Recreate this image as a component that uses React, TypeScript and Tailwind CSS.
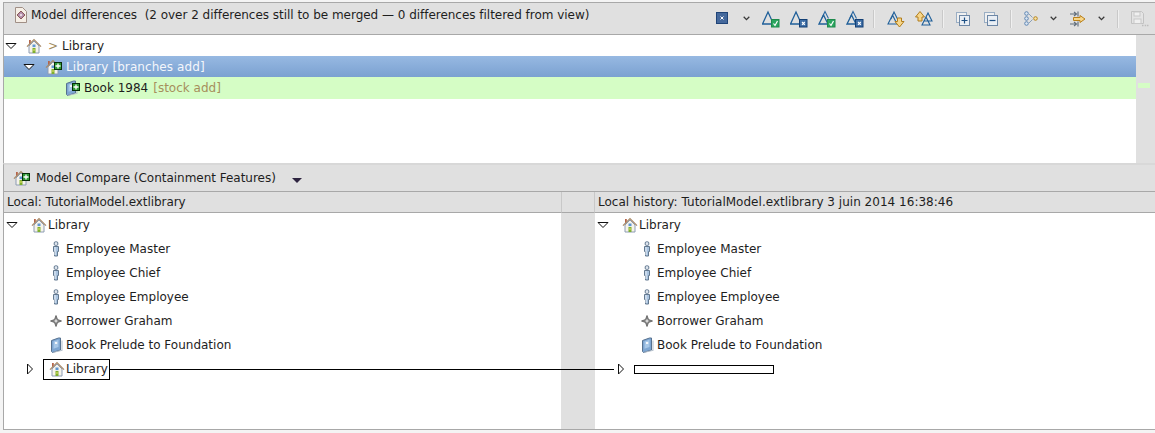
const font = "font-['DejaVu_Sans',sans-serif]"

function House({ plus }: { plus?: boolean }) {
  return (
    <span className="relative block h-4 w-4 shrink-0">
      <svg width="16" height="16" viewBox="0 0 16 16" className="block">
        <path d="M3 2h1.8v3L3 6.8z" fill="#b5654a" />
        <path d="M3 8 8 3l5 5v7H3z" fill="#f6f3ea" stroke="#8d9cb4" strokeWidth="1" />
        <path d="M1 8.6 8 1.6l7 7" fill="none" stroke="#a88a68" strokeWidth="1.3" />
        <rect x="6.5" y="6.5" width="3" height="2.6" fill="#5f97d2" />
        <rect x="6.5" y="10" width="3" height="5" fill="#7fb02f" />
        <rect x="7.5" y="11" width="1" height="2" fill="#e8e06a" />
      </svg>
      {plus && <PlusBadge />}
    </span>
  )
}

function PlusBadge() {
  return (
    <svg width="8" height="8" viewBox="0 0 8 8" className="absolute -right-[1px] top-[3px] block">
      <rect x="0" y="0" width="8" height="8" fill="#062e06" />
      <rect x="1" y="1" width="6" height="6" fill="#2f9a35" />
      <path d="M4 1.5v5M1.5 4h5" stroke="#ffffff" strokeWidth="1.3" />
    </svg>
  )
}

function BookIcon({ plus }: { plus?: boolean }) {
  return (
    <span className="relative block h-4 w-4 shrink-0">
      <svg width="16" height="16" viewBox="0 0 16 16" className="block">
        <path d="M3.5 3.5 10.5 1h2v12l-8 2.5-1-1z" fill="#7ea6d2" stroke="#56718f" strokeWidth="1" />
        <path d="M5.5 4.5l5-1.8V10l-5 1.8z" fill="#a8c8e8" />
        <rect x="7" y="5" width="2.2" height="2" fill="#f2f6fb" />
        <path d="M5 15 13.5 13V3.5h1v10.2L5.5 15.8z" fill="#b4bfcb" />
      </svg>
      {plus && <PlusBadge />}
    </span>
  )
}

function PersonIcon() {
  return (
    <svg width="16" height="16" viewBox="0 0 16 16" className="block shrink-0">
      <rect x="6.2" y="0.8" width="3.6" height="3.6" rx="1.2" fill="#dfe6ef" stroke="#62788f" />
      <path d="M5.5 5.5h5v5h-1v4.5h-3v-4.5h-1z" fill="#a9c3df" stroke="#62788f" />
      <path d="M7 6v8" stroke="#eaf0f7" />
    </svg>
  )
}

function BorrowerIcon() {
  return (
    <svg width="16" height="16" viewBox="0 0 16 16" className="block shrink-0">
      <path d="M8 2.5 9.5 6.5 13.5 8 9.5 9.5 8 13.5 6.5 9.5 2.5 8 6.5 6.5z" fill="#8c8c8c" stroke="#555" strokeWidth="0.8" />
      <circle cx="8" cy="8" r="1.4" fill="#d8d8d8" />
    </svg>
  )
}

function Caret({ open }: { open?: boolean }) {
  return (
    <svg width="12" height="12" viewBox="0 0 12 12" className="block shrink-0">
      {open ? (
        <path d="M1 3.5h10L6 8.5z" fill="#fff" stroke="#111" strokeWidth="1" />
      ) : (
        <path d="M3.5 1v10L8.5 6z" fill="#fff" stroke="#111" strokeWidth="1" />
      )}
    </svg>
  )
}

function Chevron() {
  return (
    <svg width="7" height="5" viewBox="0 0 7 5" className="block shrink-0">
      <path d="M0.7 0.8 3.5 3.6 6.3 0.8" fill="none" stroke="#3a3a3a" strokeWidth="1.3" />
    </svg>
  )
}

function Sep() {
  return <div className="h-[18px] w-[2px] border-r border-[#f0f0f0] bg-[#c9c9c9]" />
}

function Mountain({ double, mark }: { double?: boolean; mark?: "check" | "x" }) {
  return (
    <svg width="18" height="18" viewBox="0 0 18 18" className="block shrink-0">
      {double && <path d="M4 8 7 1.5l3.5 7" fill="none" stroke="#2e6aa3" strokeWidth="1.1" />}
      <path d={double ? "M1 14 5.5 5 10 14z" : "M0.5 14 6 2 11.5 14z"} fill="none" stroke="#1f5f99" strokeWidth="1.3" />
      {mark === "check" && (
        <g>
          <rect x="9.5" y="9.5" width="7.5" height="7.5" fill="#2aa55f" stroke="#1f8a4c" />
          <path d="M11.5 13.5 13 15.5 15.5 11" fill="none" stroke="#fff" strokeWidth="1.2" />
        </g>
      )}
      {mark === "x" && (
        <g>
          <rect x="9.5" y="9.5" width="7.5" height="7.5" fill="#3f6ea5" stroke="#123f75" />
          <path d="M12 12l2.8 2.8M14.8 12l-2.8 2.8" stroke="#fff" strokeWidth="1.1" />
        </g>
      )}
    </svg>
  )
}

function MergeArrow({ up }: { up?: boolean }) {
  return (
    <svg width="18" height="18" viewBox="0 0 18 18" className="block shrink-0">
      {up ? (
        <>
          <path d="M9 11 13 3l4 8zM7 15l4-8 4 8z" fill="none" stroke="#1f5f99" strokeWidth="1.1" />
          <path d="M0.5 7 5 1.5 9.5 7H7v4H3V7z" fill="#f7d68a" stroke="#b07d1c" />
        </>
      ) : (
        <>
          <path d="M1 14 5.5 5 10 14zM4 9l3-7 4 8" fill="none" stroke="#1f5f99" strokeWidth="1.1" />
          <path d="M8 11.5h2.5V8h4v3.5H17l-4.5 5.5z" fill="#f7d68a" stroke="#b07d1c" />
        </>
      )}
    </svg>
  )
}

function CollapseIcon({ minus }: { minus?: boolean }) {
  return (
    <svg width="14" height="14" viewBox="0 0 14 14" className="block shrink-0">
      <rect x="0.5" y="0.5" width="10" height="10" fill="#f0f0f0" stroke="#9aaec4" />
      <rect x="3.5" y="3.5" width="10" height="10" fill="#e9eef4" stroke="#6d87a6" />
      <path d={minus ? "M5.5 8.5h6" : "M5.5 8.5h6M8.5 5.5v6"} stroke="#1c4f84" strokeWidth="1.2" />
    </svg>
  )
}

function TreeModeIcon() {
  return (
    <svg width="15" height="15" viewBox="0 0 15 15" className="block shrink-0">
      <circle cx="2.5" cy="2.5" r="1.8" fill="#dbe6f2" stroke="#5f86b3" />
      <circle cx="2.5" cy="7.5" r="1.8" fill="#dbe6f2" stroke="#5f86b3" />
      <circle cx="2.5" cy="12.5" r="1.8" fill="#dbe6f2" stroke="#5f86b3" />
      <path d="M5 3l3.5 3.5M5 12l3.5-3.5" stroke="#8aa0b8" />
      <circle cx="11.5" cy="7.5" r="1.8" fill="#f6e1a6" stroke="#b7861f" />
    </svg>
  )
}

function FilterMergeIcon() {
  return (
    <svg width="16" height="16" viewBox="0 0 16 16" className="block shrink-0">
      <path d="M0 3h6M4 1l2.5 2L4 5M8 0.5v5M0 13h6M4 11l2.5 2L4 15M8 10.5v5" fill="none" stroke="#5f6c7a" strokeWidth="1.1" />
      <path d="M3.5 6.5H10V4.5L15 8l-5 3.5v-2H3.5z" fill="#f7d68a" stroke="#b9801a" />
    </svg>
  )
}

function SaveIcon() {
  return (
    <svg width="18" height="16" viewBox="0 0 18 16" className="block shrink-0">
      <path d="M0.5 0.5h10l2 2v10h-12z" fill="#e4e4e4" stroke="#c2c2c2" />
      <rect x="3" y="1" width="6" height="4" fill="#f0f0f0" stroke="#c8c8c8" />
      <rect x="3" y="8" width="7" height="4.5" fill="#f0f0f0" stroke="#c8c8c8" />
      <path d="M11 14.5h1.5M13.7 14.5h1.5M16 14.5h1.5" stroke="#bdbdbd" strokeWidth="1.4" />
    </svg>
  )
}

function ModelDiffIcon() {
  return (
    <svg width="16" height="16" viewBox="0 0 16 16" className="block shrink-0">
      <path d="M2.5 0.5h7l4 4v11h-11z" fill="#f6efe6" stroke="#a08f86" />
      <path d="M8 4 12 8 8 12 4 8z" fill="#b08aa8" stroke="#8a5a5a" />
      <circle cx="8" cy="8" r="1.3" fill="#e8d8e0" />
    </svg>
  )
}

function TreeRow({ icon, label }: { icon: React.ReactNode; label: string }) {
  return (
    <div className="flex h-6 items-center gap-[2px] pl-[44px]">
      {icon}
      <span>{label}</span>
    </div>
  )
}

function CompareTree() {
  return (
    <>
      <div className="flex h-6 items-center">
        <span className="ml-[2px]"><Caret open /></span>
        <span className="ml-[13px]"><House /></span>
        <span className="ml-[1px]">Library</span>
      </div>
      <TreeRow icon={<PersonIcon />} label="Employee Master" />
      <TreeRow icon={<PersonIcon />} label="Employee Chief" />
      <TreeRow icon={<PersonIcon />} label="Employee Employee" />
      <TreeRow icon={<BorrowerIcon />} label="Borrower Graham" />
      <TreeRow icon={<BookIcon />} label="Book Prelude to Foundation" />
    </>
  )
}

export default function App() {
  return (
    <div className={`${font} h-[433px] w-[1155px] overflow-hidden bg-[#f4f4f4] pl-[3px] pt-[2px] text-[12px] leading-none text-[#1e1e1e]`}>
      {/* top panel */}
      <div className="flex h-[161px] flex-col border-l border-t border-[#a8a8a8]">
        <div className="flex h-[32px] items-center border-b border-[#a8a8a8] bg-[#e0e0e0] pb-[7px] pl-[9px]">
          <ModelDiffIcon />
          <span className="ml-[2px] tracking-[-0.025px]">Model differences&nbsp; (2 over 2 differences still to be merged — 0 differences filtered from view)</span>
          <div className="ml-auto flex items-center pt-[7px]">
            <svg width="13" height="13" viewBox="0 0 13 13" className="block shrink-0">
              <rect x="0.5" y="0.5" width="11" height="11" fill="#45699c" stroke="#1f4478" />
              <path d="M4.5 4.5l3 3M7.5 4.5l-3 3" stroke="#fff" />
            </svg>
            <span className="ml-[14px]"><Chevron /></span>
            <span className="ml-[12px]"><Mountain mark="check" /></span>
            <span className="ml-[10px]"><Mountain mark="x" /></span>
            <span className="ml-[10px]"><Mountain double mark="check" /></span>
            <span className="ml-[10px]"><Mountain double mark="x" /></span>
            <span className="ml-[9px]"><Sep /></span>
            <span className="ml-[12px]"><MergeArrow /></span>
            <span className="ml-[10px]"><MergeArrow up /></span>
            <span className="ml-[9px]"><Sep /></span>
            <span className="ml-[12px]"><CollapseIcon /></span>
            <span className="ml-[14px]"><CollapseIcon minus /></span>
            <span className="ml-[12px]"><Sep /></span>
            <span className="ml-[12px]"><TreeModeIcon /></span>
            <span className="ml-[11px]"><Chevron /></span>
            <span className="ml-[13px]"><FilterMergeIcon /></span>
            <span className="ml-[12px]"><Chevron /></span>
            <span className="ml-[12px]"><Sep /></span>
            <span className="ml-[12px] mr-[6px]"><SaveIcon /></span>
          </div>
        </div>
        <div className="flex flex-1">
          <div className="flex-1 bg-white">
            <div className="flex h-[21px] items-center pl-[1px]">
              <Caret open />
              <span className="ml-[9px]"><House /></span>
              <span className="ml-[6px] text-[#a08a5c]">&gt;</span>
              <span className="pl-[4px]">Library</span>
            </div>
            <div className="flex h-[21px] items-center bg-gradient-to-b from-[#97b9e2] to-[#7ba1d1] pl-[19px] text-[#f4f6fb]">
              <Caret open />
              <span className="ml-[10px]"><House plus /></span>
              <span className="ml-[5px] tracking-[0.08px]">Library [branches add]</span>
            </div>
            <div className="flex h-[22px] items-center bg-[#d5fdc5] pl-[59px]">
              <BookIcon plus />
              <span className="ml-[5px]">Book 1984</span>
              <span className="ml-[5px] text-[#a68f5c]">[stock add]</span>
            </div>
          </div>
          <div className="w-[19px] shrink-0 bg-[#e0e0e0] pt-[48px]">
            <div className="ml-[2px] h-[5px] w-[12px] bg-[#d5fdc5]" />
          </div>
        </div>
      </div>

      {/* compare panel */}
      <div className="relative flex h-[267px] flex-col border-b border-l border-t-2 border-[#a8a8a8] border-t-[#d8d8d8]">
        <div className="flex h-[27px] shrink-0 items-center border-b border-[#a8a8a8] bg-[#e0e0e0] pl-[9px]">
          <House plus />
          <span className="ml-[7px] tracking-[-0.02px]">Model Compare (Containment Features)</span>
          <svg width="10" height="6" viewBox="0 0 10 6" className="ml-[16px] mt-[5px] block shrink-0">
            <path d="M0 0h10L5 5z" fill="#2e2440" />
          </svg>
        </div>
        <div className="flex flex-1">
          <div className="flex w-[557px] shrink-0 flex-col bg-white">
            <div className="flex h-[21px] items-center border-b border-[#a8a8a8] bg-[#e0e0e0] pl-[3px] tracking-[-0.06px]">Local: TutorialModel.extlibrary</div>
            <CompareTree />
            <div className="flex h-6 items-center pl-[20px]">
              <Caret />
              <div className="ml-[7px] flex h-[21px] w-[67px] items-center gap-[1px] border border-black pl-[5px]">
                <House />
                <span>Library</span>
              </div>
            </div>
          </div>
          <div className="flex w-[34px] shrink-0 flex-col bg-[#e0e0e0]">
            <div className="h-[21px] border-x border-b border-[#a8a8a8] border-x-[#c8c8c8]" />
          </div>
          <div className="flex flex-1 flex-col bg-white">
            <div className="flex h-[21px] items-center border-b border-[#a8a8a8] bg-[#e0e0e0] pl-[3px] tracking-[0.02px]">Local history: TutorialModel.extlibrary 3 juin 2014 16:38:46</div>
            <CompareTree />
            <div className="flex h-6 items-center pl-[20px]">
              <Caret />
              <div className="ml-[7px] h-[9px] w-[140px] border border-black" />
            </div>
          </div>
        </div>
        {/* link between the matching elements */}
        <div className="absolute left-[106px] top-[204px] h-px w-[504px] bg-black" />
      </div>
    </div>
  )
}
